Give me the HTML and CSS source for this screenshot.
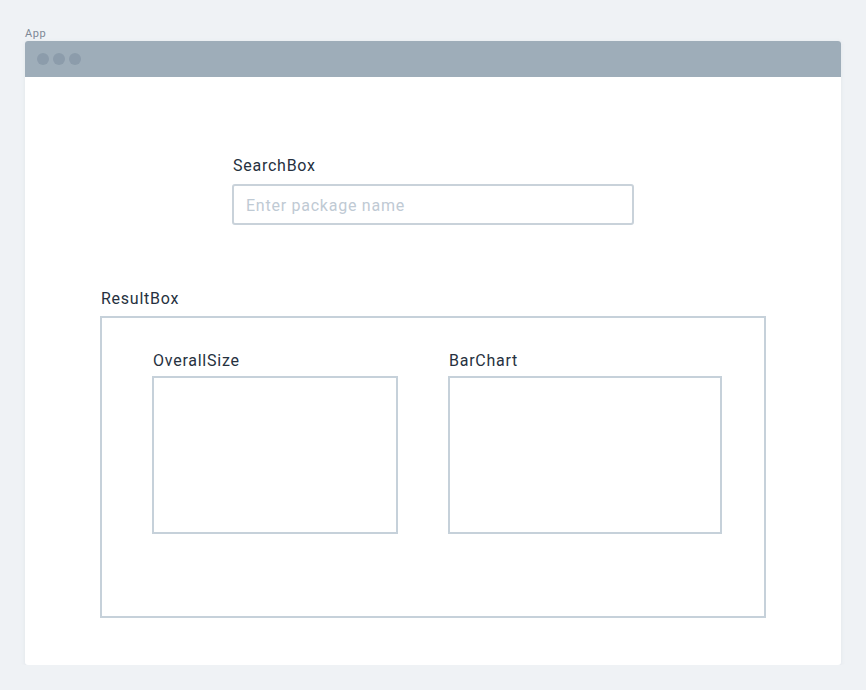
FILE: index.html
```html
<!DOCTYPE html>
<html>
<head>
<meta charset="utf-8">
<link rel="stylesheet" href="styles.css">
</head>
<body>
<div class="page">
  <div class="app-label">App</div>
  <div class="window">
    <div class="titlebar">
      <span class="dot"></span><span class="dot"></span><span class="dot"></span>
    </div>
    <div class="content">
      <div class="search">
        <div class="label">SearchBox</div>
        <input class="input" type="text" placeholder="Enter package name">
      </div>
      <div class="result">
        <div class="label">ResultBox</div>
        <div class="result-box">
          <div class="panel overall">
            <div class="label">OverallSize</div>
            <div class="panel-box"></div>
          </div>
          <div class="panel chart">
            <div class="label">BarChart</div>
            <div class="panel-box"></div>
          </div>
        </div>
      </div>
    </div>
  </div>
</div>
</body>
</html>
```
FILE: styles.css
```css
html, body {
  margin: 0;
  padding: 0;
  background: #eff2f5;
  font-family: Roboto, "Noto Sans", sans-serif;
}
.page {
  padding: 27px 25px 0 25px;
  width: 816px;
}
.app-label {
  font-size: 11px;
  line-height: 14px;
  letter-spacing: 0.6px;
  color: #7d8895;
  height: 14px;
}
.window {
  width: 816px;
  height: 624px;
  background: #ffffff;
  border-radius: 3px;
  box-shadow: 0 1px 4px rgba(120, 140, 160, 0.12);
  display: flex;
  flex-direction: column;
}
.titlebar {
  height: 36px;
  background: #9eadb9;
  border-radius: 3px 3px 0 0;
  display: flex;
  align-items: center;
  gap: 4px;
  padding-left: 12px;
}
.dot {
  width: 12px;
  height: 12px;
  border-radius: 50%;
  background: #8c9cab;
}
.content {
  padding-top: 77px;
}
.label {
  font-size: 16px;
  line-height: 20px;
  letter-spacing: 0.75px;
  color: #263140;
  padding: 2px 0 0 1px;
}
.search {
  margin-left: 207px;
  width: 402px;
}
.search .label {
  margin-bottom: 8px;
}
.input {
  box-sizing: border-box;
  width: 402px;
  height: 41px;
  border: 2px solid #c9d2da;
  border-radius: 3px;
  padding: 1px 12px 0 12px;
  font-family: inherit;
  font-size: 16px;
  letter-spacing: 0.75px;
  color: #263140;
  outline: none;
  display: block;
}
.input::placeholder {
  color: #bfcad4;
}
.result {
  margin-left: 75px;
  margin-top: 62px;
}
.result .label {
  margin-bottom: 7px;
}
.result-box {
  box-sizing: border-box;
  width: 666px;
  height: 302px;
  border: 2px solid #c6d1da;
  padding: 31px 0 0 50px;
  display: flex;
  gap: 50px;
  align-items: flex-start;
}
.panel .label {
  margin-bottom: 5px;
}
.panel-box {
  box-sizing: border-box;
  height: 158px;
  border: 2px solid #c6d1da;
}
.overall .panel-box { width: 246px; }
.chart .panel-box { width: 274px; }
```
